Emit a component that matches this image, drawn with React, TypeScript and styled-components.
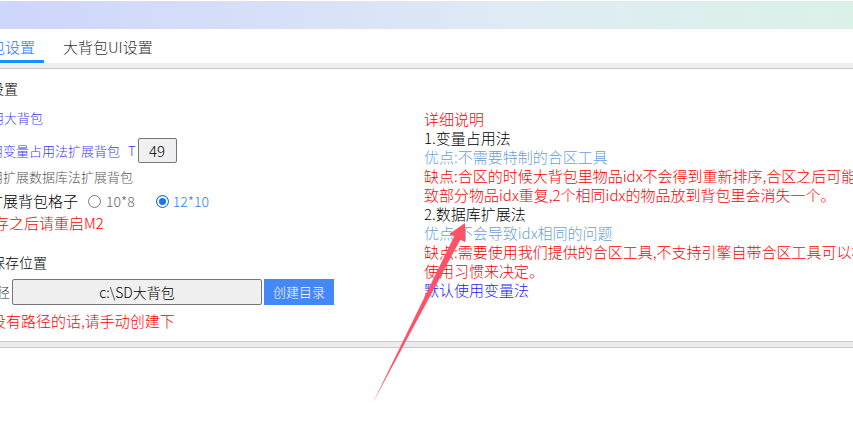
import React from "react";
import styled, { createGlobalStyle } from "styled-components";

const GlobalStyle = createGlobalStyle`
  html, body {
    margin: 0;
    padding: 0;
    background: #fff;
    overflow: hidden;
  }
  body {
    font-family: "Noto Sans CJK SC", "Noto Sans", sans-serif;
    font-weight: 300;
    color: #000;
  }
`;

const Page = styled.div`
  position: relative;
  width: 853px;
  height: 434px;
  overflow: hidden;
  background: #fff;
`;

const Banner = styled.div`
  height: 28px;
  margin-top: 1px;
  background: linear-gradient(90deg, #cdd6fb 0%, #d7e1f8 35%, #dfecf4 62%, #daf1e8 100%);
`;

const TabBar = styled.div`
  display: flex;
  gap: 10px;
  height: 34px;
`;

const Tab = styled.div<{ $active?: boolean; $shift?: number }>`
  margin-left: ${(p) => p.$shift ?? 0}px;
  padding: 4px 9px 0;
  height: 27px;
  line-height: 27px;
  font-size: 15px;
  white-space: nowrap;
  color: ${(p) => (p.$active ? "#1677ff" : "#333")};
  border-bottom: 3px solid ${(p) => (p.$active ? "#1890ff" : "transparent")};
`;

const Strip = styled.div`
  height: 5px;
  background: #efeff1;
  border-bottom: 1px solid #c9c9cc;
`;

const Content = styled.div`
  display: grid;
  grid-template-columns: 424px 1fr;
  height: 272px;
`;

const Settings = styled.div`
  display: flex;
  flex-direction: column;
  align-items: flex-start;
  padding-top: 9px;
`;

const Row = styled.div<{ $mt: number; $shift: number; $h?: number }>`
  display: flex;
  align-items: center;
  margin-top: ${(p) => p.$mt}px;
  margin-left: ${(p) => p.$shift}px;
  height: ${(p) => p.$h ?? 20}px;
  white-space: nowrap;
`;

const Label = styled.span<{ $size?: number; $color?: string; $gap?: number }>`
  font-size: ${(p) => p.$size ?? 15}px;
  line-height: 20px;
  color: ${(p) => p.$color ?? "#000"};
  margin-left: ${(p) => p.$gap ?? 0}px;
`;

const NumberBox = styled.div`
  box-sizing: border-box;
  width: 39px;
  height: 25px;
  margin-left: 2px;
  border: 1px solid #767676;
  border-radius: 2px;
  background: #f0f0f0;
  font-size: 15px;
  line-height: 23px;
  text-align: center;
`;

const Radio = styled.span<{ $checked?: boolean; $gap: number }>`
  box-sizing: border-box;
  width: 13px;
  height: 13px;
  margin-left: ${(p) => p.$gap}px;
  border-radius: 50%;
  border: 1px solid ${(p) => (p.$checked ? "#1a73e8" : "#767676")};
  background: ${(p) => (p.$checked ? "#1a73e8" : "#fff")};
  box-shadow: ${(p) => (p.$checked ? "inset 0 0 0 2px #fff" : "none")};
`;

const PathBox = styled.div`
  box-sizing: border-box;
  width: 250px;
  height: 26px;
  margin-left: 2px;
  border: 1px solid #767676;
  border-radius: 2px;
  background: #f0f0f0;
  font-size: 14px;
  line-height: 24px;
  text-align: center;
`;

const Button = styled.div`
  width: 70px;
  height: 26px;
  margin-left: 2px;
  background: #4487f6;
  color: #fff;
  font-size: 13px;
  line-height: 26px;
  text-align: center;
`;

const Notes = styled.div`
  padding-top: 40px;
  font-size: 15px;
  line-height: 19px;
  white-space: nowrap;
`;

const Note = styled.div<{ $color: string }>`
  color: ${(p) => p.$color};
`;

const Footer = styled.div`
  height: 5px;
  background: #ececf0;
  border-top: 1px solid #cacaca;
  border-bottom: 1px solid #cacaca;
`;

const Annotation = styled.svg`
  position: absolute;
  left: 0;
  top: 0;
  pointer-events: none;
`;

const BLUE = "#3c3cf5";
const RED = "#ff0000";

export default function App() {
  return (
    <Page>
      <GlobalStyle />
      <Banner />
      <TabBar>
        <Tab $active $shift={-34}>背包设置</Tab>
        <Tab>大背包UI设置</Tab>
      </TabBar>
      <Strip />
      <Content>
        <Settings>
          <Row $mt={0} $shift={-38}>
            <Label $size={14}>背包设置</Label>
          </Row>
          <Row $mt={10} $shift={-22}>
            <Label $size={13} $color={BLUE}>启用大背包</Label>
          </Row>
          <Row $mt={10} $shift={-23} $h={25}>
            <Label $size={13} $color={BLUE}>使用变量占用法扩展背包</Label>
            <Label $size={13} $color={BLUE} $gap={8}>T</Label>
            <NumberBox>49</NumberBox>
          </Row>
          <Row $mt={4} $shift={-23}>
            <Label $size={13} $color="#555">使用扩展数据库法扩展背包</Label>
          </Row>
          <Row $mt={4} $shift={-12}>
            <Label>扩展背包格子</Label>
            <Radio $gap={10} />
            <Label $size={14} $color="#666" $gap={5}>10*8</Label>
            <Radio $checked $gap={21} />
            <Label $size={14} $color="#2f7cf6" $gap={4}>12*10</Label>
          </Row>
          <Row $mt={2} $shift={-21}>
            <Label $color={RED}>保存之后请重启M2</Label>
          </Row>
          <Row $mt={19} $shift={-9}>
            <Label $size={14}>保存位置</Label>
          </Row>
          <Row $mt={7} $shift={-16} $h={26}>
            <Label $size={13} $color="#333">路径</Label>
            <PathBox>c:\SD大背包</PathBox>
            <Button>创建目录</Button>
          </Row>
          <Row $mt={6} $shift={-9}>
            <Label $color={RED}>没有路径的话,请手动创建下</Label>
          </Row>
        </Settings>
        <Notes>
          <Note $color={RED}>详细说明</Note>
          <Note $color="#000">1.变量占用法</Note>
          <Note $color="#6a9fdc">优点:不需要特制的合区工具</Note>
          <Note $color={RED}>缺点:合区的时候大背包里物品idx不会得到重新排序,合区之后可能导</Note>
          <Note $color={RED}>致部分物品idx重复,2个相同idx的物品放到背包里会消失一个。</Note>
          <Note $color="#000">2.数据库扩展法</Note>
          <Note $color="#6a9fdc">优点:不会导致idx相同的问题</Note>
          <Note $color={RED}>缺点:需要使用我们提供的合区工具,不支持引擎自带合区工具可以根据自己的</Note>
          <Note $color={RED}>使用习惯来决定。</Note>
          <Note $color="#1a1aff">默认使用变量法</Note>
        </Notes>
      </Content>
      <Footer />
      <Annotation width="853" height="434" viewBox="0 0 853 434">
        <polygon
          points="372.5,403.5 460.3,239.7 465.2,242.2 465,223 449.2,234 454.1,236.5"
          fill="#ff5266"
        />
      </Annotation>
    </Page>
  );
}
